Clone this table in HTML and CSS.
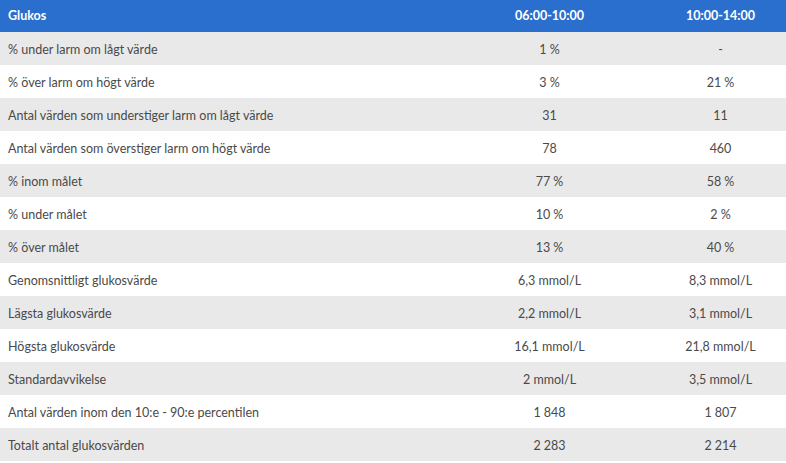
FILE: index.html
```html
<!DOCTYPE html>
<html lang="sv">
<head>
<meta charset="utf-8">
<link rel="stylesheet" href="styles.css">
</head>
<body>
<table class="stats">
  <thead>
    <tr><th class="label">Glukos</th><th>06:00-10:00</th><th>10:00-14:00</th></tr>
  </thead>
  <tbody>
    <tr><td class="label">% under larm om lågt värde</td><td>1 %</td><td>-</td></tr>
    <tr><td class="label">% över larm om högt värde</td><td>3 %</td><td>21 %</td></tr>
    <tr><td class="label">Antal värden som understiger larm om lågt värde</td><td>31</td><td>11</td></tr>
    <tr><td class="label">Antal värden som överstiger larm om högt värde</td><td>78</td><td>460</td></tr>
    <tr><td class="label">% inom målet</td><td>77 %</td><td>58 %</td></tr>
    <tr><td class="label">% under målet</td><td>10 %</td><td>2 %</td></tr>
    <tr><td class="label">% över målet</td><td>13 %</td><td>40 %</td></tr>
    <tr><td class="label">Genomsnittligt glukosvärde</td><td>6,3 mmol/L</td><td>8,3 mmol/L</td></tr>
    <tr><td class="label">Lägsta glukosvärde</td><td>2,2 mmol/L</td><td>3,1 mmol/L</td></tr>
    <tr><td class="label">Högsta glukosvärde</td><td>16,1 mmol/L</td><td>21,8 mmol/L</td></tr>
    <tr><td class="label">Standardavvikelse</td><td>2 mmol/L</td><td>3,5 mmol/L</td></tr>
    <tr><td class="label">Antal värden inom den 10:e - 90:e percentilen</td><td>1 848</td><td>1 807</td></tr>
    <tr><td class="label">Totalt antal glukosvärden</td><td>2 283</td><td>2 214</td></tr>
  </tbody>
</table>
</body>
</html>
```
FILE: styles.css
```css
html, body {
  margin: 0;
  padding: 0;
  background: #ffffff;
  overflow: hidden;
}
.stats {
  width: 806px;
  border-collapse: collapse;
  table-layout: fixed;
  font-family: Lato, "Liberation Sans", sans-serif;
  font-size: 12.5px;
  color: #4a4a4a;
}
.stats th, .stats td {
  padding: 0;
  text-align: center;
  white-space: nowrap;
  line-height: 16px;
}
.stats thead tr {
  height: 32px;
}
.stats tbody tr {
  height: 33px;
}
.stats th {
  background: #2b6fce;
  color: #ffffff;
  font-weight: 700;
  font-size: 12.5px;
}
.stats td {
  padding-top: 2px;
}
.stats th.label, .stats td.label {
  width: 456px;
  padding-left: 8px;
  text-align: left;
}
.stats tbody tr:nth-child(odd) td {
  background: #e9e9e9;
}
```
